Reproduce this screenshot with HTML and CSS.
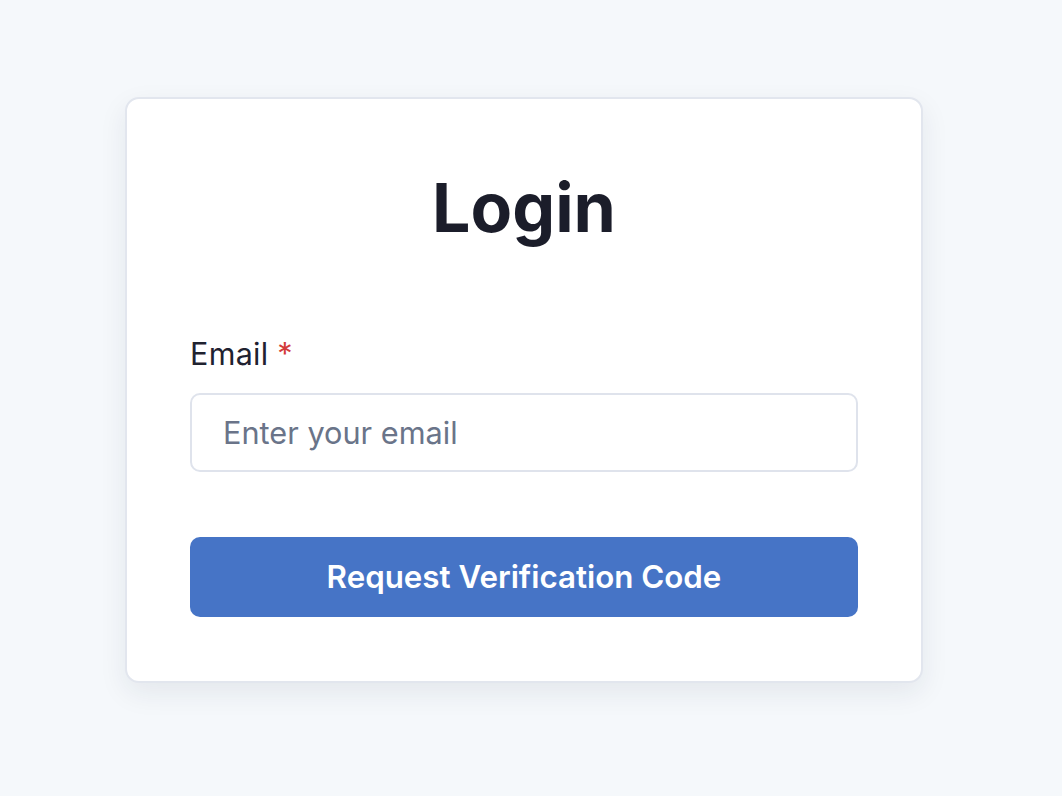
FILE: index.html
```html
<!DOCTYPE html>
<html lang="en">
<head>
<meta charset="utf-8">
<title>Login</title>
<link rel="stylesheet" href="styles.css">
</head>
<body>
<div class="page">
  <div class="card">
    <h1 class="title">Login</h1>
    <form class="form">
      <label class="label" for="email">Email <span class="req">*</span></label>
      <input class="input" id="email" type="email" placeholder="Enter your email">
      <button class="btn" type="button">Request Verification Code</button>
    </form>
  </div>
</div>
</body>
</html>
```

FILE: styles.css
```css
html, body {
  margin: 0;
  padding: 0;
  background: #f5f8fb;
  font-family: Inter, "Noto Sans", sans-serif;
}
.page {
  padding: 97px 0 0 125px;
  min-height: 796px;
  box-sizing: border-box;
}
.card {
  width: 798px;
  height: 586px;
  box-sizing: border-box;
  background: #ffffff;
  border: 2px solid #e2e6ee;
  border-radius: 14px;
  box-shadow: 0 10px 28px rgba(30, 40, 70, 0.08);
  padding: 67px 63px 63px 63px;
  display: flex;
  flex-direction: column;
}
.title {
  margin: 0;
  text-align: center;
  font-size: 68px;
  line-height: 82px;
  font-weight: 700;
  color: #1b1d2a;
}
.form {
  display: flex;
  flex-direction: column;
  margin-top: 88px;
}
.label {
  font-size: 30.5px;
  line-height: 35px;
  color: #1f2230;
  font-weight: 400;
  letter-spacing: 0.3px;
}
.req {
  color: #d33b3b;
}
.input {
  margin-top: 22px;
  height: 79px;
  box-sizing: border-box;
  border: 2px solid #dfe3ec;
  border-radius: 10px;
  padding: 0 31px;
  font-family: Inter, "Noto Sans", sans-serif;
  font-size: 30.7px;
  color: #1f2230;
  outline: none;
  background: #fff;
}
.input::placeholder {
  color: #6a7489;
}
.btn {
  margin-top: 65px;
  height: 80px;
  border: none;
  border-radius: 10px;
  background: #4674c6;
  color: #ffffff;
  font-family: Inter, "Noto Sans", sans-serif;
  font-size: 31.3px;
  font-weight: 600;
}
```
